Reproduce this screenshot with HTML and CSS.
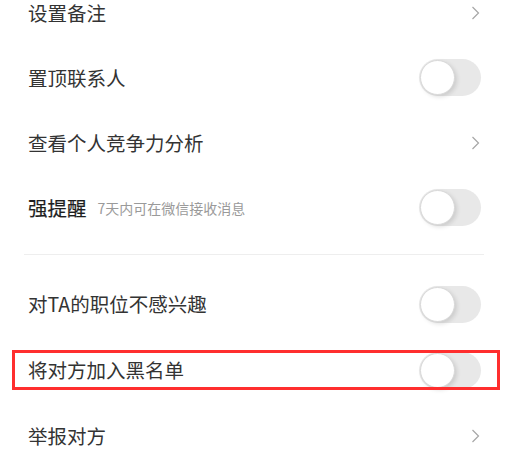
FILE: index.html
```html
<!DOCTYPE html>
<html lang="zh-CN">
<head>
<meta charset="utf-8">
<link rel="stylesheet" href="styles.css">
</head>
<body>
<div class="page">
  <div class="group">
    <div class="row">
      <span class="label">设置备注</span>
      <svg class="chev" width="9" height="14" viewBox="0 0 9 14"><polyline points="1.5,1 7.5,7 1.5,13" fill="none" stroke="#a6a6a6" stroke-width="1.2"/></svg>
    </div>
    <div class="row">
      <span class="label">置顶联系人</span>
      <span class="toggle"><span class="knob"></span></span>
    </div>
    <div class="row">
      <span class="label">查看个人竞争力分析</span>
      <svg class="chev" width="9" height="14" viewBox="0 0 9 14"><polyline points="1.5,1 7.5,7 1.5,13" fill="none" stroke="#a6a6a6" stroke-width="1.2"/></svg>
    </div>
    <div class="row">
      <span class="label"><span class="strong">强提醒</span><span class="sub">7天内可在微信接收消息</span></span>
      <span class="toggle"><span class="knob"></span></span>
    </div>
  </div>
  <div class="divider"><div class="line"></div></div>
  <div class="group group2">
    <div class="row">
      <span class="label">对TA的职位不感兴趣</span>
      <span class="toggle"><span class="knob"></span></span>
    </div>
    <div class="row">
      <span class="label">将对方加入黑名单</span>
      <span class="toggle"><span class="knob"></span></span>
      <div class="highlight"></div>
    </div>
    <div class="row">
      <span class="label">举报对方</span>
      <svg class="chev" width="9" height="14" viewBox="0 0 9 14"><polyline points="1.5,1 7.5,7 1.5,13" fill="none" stroke="#a6a6a6" stroke-width="1.2"/></svg>
    </div>
  </div>
</div>
</body>
</html>
```
FILE: styles.css
```css
html, body {
  margin: 0;
  padding: 0;
  background: #ffffff;
  overflow: hidden;
}
body {
  width: 520px;
  height: 456px;
  font-family: "Noto Sans CJK SC", "Noto Sans", sans-serif;
  color: #333333;
}
.page {
  margin-top: -20px;
}
.row {
  position: relative;
  height: 65px;
  display: flex;
  align-items: center;
  justify-content: space-between;
  padding: 0 39px 0 28px;
}
.group2 .row {
  height: 66px;
}
.label {
  font-size: 19.5px;
  line-height: 1;
  display: flex;
  align-items: center;
}
.strong {
  color: #1e1e1e;
  -webkit-text-stroke: 0.2px #1e1e1e;
}
.sub {
  font-size: 14px;
  font-weight: 400;
  color: #9a9a9a;
  margin-left: 11px;
}
.chev {
  margin-right: 1px;
}
.toggle {
  width: 62px;
  height: 37px;
  border-radius: 19px;
  background: #e8e8e8;
  display: flex;
  align-items: center;
  padding-left: 1px;
  box-sizing: border-box;
}
.knob {
  width: 35px;
  height: 35px;
  border-radius: 50%;
  background: #ffffff;
  box-sizing: border-box;
  border: 1px solid #d9d9d9;
  box-shadow: 2px 2px 4px rgba(0,0,0,0.12);
}
.divider {
  padding: 14px 36px 16px 24px;
}
.line {
  height: 1px;
  background: #eeeeee;
}
.highlight {
  position: absolute;
  left: 12px;
  top: 13px;
  width: 488px;
  height: 40px;
  box-sizing: border-box;
  border: 3px solid #ff2e2e;
}
```
